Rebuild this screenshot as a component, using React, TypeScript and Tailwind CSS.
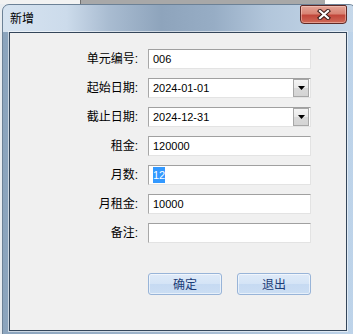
const rows: { label: string; value: string; combo?: boolean; selected?: boolean }[] = [
  { label: "单元编号", value: "006" },
  { label: "起始日期", value: "2024-01-01", combo: true },
  { label: "截止日期", value: "2024-12-31", combo: true },
  { label: "租金", value: "120000" },
  { label: "月数", value: "12", selected: true },
  { label: "月租金", value: "10000" },
  { label: "备注", value: "" },
];

function CloseButton() {
  return (
    <div className="w-[47px] h-[19px] rounded-b-[4px] rounded-t-[2px] border border-[#5e2a27] bg-[linear-gradient(#e4a497_0%,#d98474_45%,#c2473b_55%,#cf6a58_100%)] shadow-[inset_0_0_0_1px_rgba(255,220,210,0.45)] flex items-center justify-center">
      <svg width="14" height="11" viewBox="0 0 14 11">
        <path d="M3 2 L11 9 M11 2 L3 9" stroke="#3b1c1a" strokeWidth="4.2" strokeLinecap="square" />
        <path d="M3 2 L11 9 M11 2 L3 9" stroke="#ffffff" strokeWidth="2.2" strokeLinecap="square" />
      </svg>
    </div>
  );
}

function Field({ value, combo, selected }: { value: string; combo?: boolean; selected?: boolean }) {
  return (
    <div className="h-[20px] w-[163px] flex items-stretch bg-white border border-t-[#a0a0a0] border-l-[#a8a8a8] border-r-[#e3e3e3] border-b-[#e3e3e3] font-['Liberation_Sans',sans-serif] text-[11px] text-black">
      <div className="flex-1 flex items-center pl-[4px]">
        {selected ? (
          <span className="bg-[#3399ff] text-white h-[16px] leading-[16px]">{value}</span>
        ) : (
          value
        )}
      </div>
      {combo && (
        <div className="w-[16px] h-[18px] mr-[1px] border border-[#a7a7a7] bg-[linear-gradient(#f4f4f4,#e9e9e9_50%,#d9d9d9_51%,#d4d4d4)] flex items-center justify-center">
          <svg width="7" height="4" viewBox="0 0 7 4">
            <polygon points="0,0 7,0 3.5,4" fill="#000" />
          </svg>
        </div>
      )}
    </div>
  );
}

export default function App() {
  return (
    <div className="w-[353px] h-[334px] overflow-hidden bg-[#e9edf1]">
      {/* desktop behind */}
      <div className="flex h-[4px]">
        <div className="w-[80px] bg-[#f2f2f2]" />
        <div className="w-[245px] bg-[#a8a8a8] border-l border-[#707070]" />
        <div className="flex-1 bg-white" />
      </div>

      {/* window */}
      <div className="ml-[2px] w-[354px] h-[332px] rounded-t-[7px] overflow-hidden border border-[#6c8196] bg-[linear-gradient(90deg,#8ba4bd_0%,#a3b8ce_50%,#bed4ea_100%)] flex flex-col">
        <div className="h-[27px] flex justify-between pl-[7px] pr-[8px] bg-[linear-gradient(90deg,#d6e3f0_0%,#ccdbeb_18%,#a9bcd1_30%,#8ea4bc_45%,#97adc5_60%,#b2c6db_75%,#c6d8ea_100%)]">
          <span className="mt-[5px] text-[12px] leading-[16px] text-black font-['Noto_Sans_CJK_SC',sans-serif]">
            新增
          </span>
          <CloseButton />
        </div>

        <div className="pl-[6px]">
          <div className="w-[338px] h-[299px] bg-[#f0f0f0] border border-[#34465a] shadow-[0_0_0_1px_rgba(255,255,255,0.55)]">
            <div className="pt-[16px] grid grid-cols-[130px_163px] gap-x-[8px] gap-y-[9px]">
              {rows.map((r) => (
                <div key={r.label} className="contents">
                  <div className="h-[20px] flex items-center justify-end pr-[2px] text-[12px] text-black font-['Liberation_Sans','Noto_Sans_CJK_SC',sans-serif]">
                    {r.label}:
                  </div>
                  <Field value={r.value} combo={r.combo} selected={r.selected} />
                </div>
              ))}
            </div>

            <div className="mt-[30px] pl-[138px] flex gap-[15px]">
              {["确定", "退出"].map((t) => (
                <button
                  key={t}
                  className="w-[74px] h-[22px] rounded-[3px] border border-[#98b4d8] bg-[linear-gradient(#dfeaf8_0%,#d4e4f6_50%,#c6daf2_51%,#cbdef3_100%)] shadow-[inset_0_0_0_1px_rgba(255,255,255,0.55)] text-[12px] text-[#1c3d78] font-['Noto_Sans_CJK_SC',sans-serif] flex items-center justify-center"
                >
                  {t}
                </button>
              ))}
            </div>
          </div>
        </div>
      </div>
    </div>
  );
}
